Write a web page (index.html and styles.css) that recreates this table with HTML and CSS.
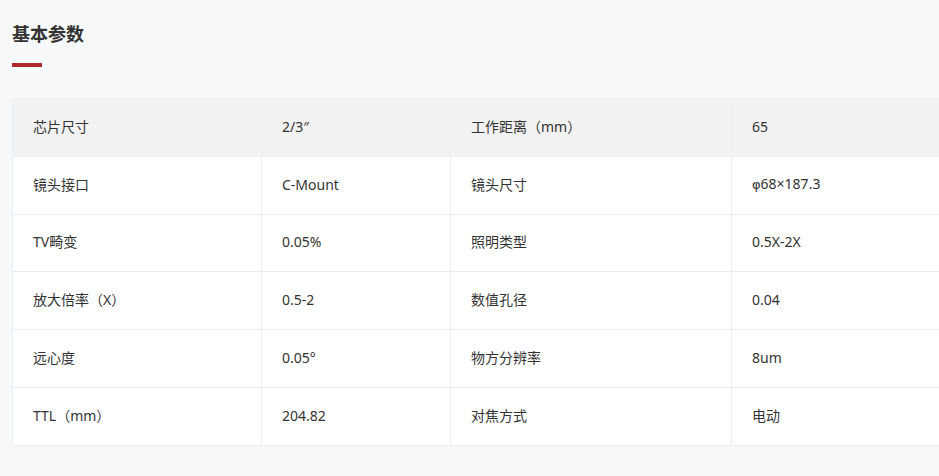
FILE: index.html
```html
<!DOCTYPE html>
<html lang="zh-CN">
<head>
<meta charset="utf-8">
<title>基本参数</title>
<link rel="stylesheet" href="styles.css">
</head>
<body>
<section class="params">
  <h2 class="params-title">基本参数</h2>
  <div class="params-bar"></div>
  <div class="table-wrap">
    <table class="spec">
      <colgroup>
        <col class="c1"><col class="c2"><col class="c3"><col class="c4">
      </colgroup>
      <tbody>
        <tr class="head"><td>芯片尺寸</td><td>2/3″</td><td>工作距离（mm）</td><td>65</td></tr>
        <tr><td>镜头接口</td><td>C-Mount</td><td>镜头尺寸</td><td><span class="phi">φ</span>68×187.3</td></tr>
        <tr><td>TV畸变</td><td>0.05%</td><td>照明类型</td><td>0.5X-2X</td></tr>
        <tr><td>放大倍率（X）</td><td>0.5-2</td><td>数值孔径</td><td>0.04</td></tr>
        <tr><td>远心度</td><td>0.05°</td><td>物方分辨率</td><td>8um</td></tr>
        <tr><td>TTL（mm）</td><td>204.82</td><td>对焦方式</td><td>电动</td></tr>
      </tbody>
    </table>
    <div class="shade"></div>
  </div>
</section>
</body>
</html>
```

FILE: styles.css
```css
html, body {
  margin: 0;
  padding: 0;
  background: #f7f8fa;
  overflow: hidden;
}

body {
  font-family: "Noto Sans", "Noto Sans CJK SC", sans-serif;
  color: #333;
}

.params {
  padding: 22px 0 0 12px;
}

.params-title {
  margin: 0;
  font-family: "Noto Sans CJK SC", sans-serif;
  font-size: 18px;
  line-height: 22px;
  font-weight: 700;
  color: #333;
}

.params-bar {
  width: 30px;
  height: 4px;
  margin-top: 19px;
  background: #b0282a;
}

.table-wrap {
  position: relative;
  margin-top: 31px;
}

.spec {
  width: 927px;
  table-layout: fixed;
  border-collapse: collapse;
  background: #fff;
  position: relative;
  z-index: 1;
}

.c1 { width: 249px; }
.c2 { width: 189px; }
.c3 { width: 281px; }

.spec td {
  height: 57.8px;
  padding: 0 20px 1px;
  border: 1px solid #ececec;
  font-size: 14px;
  line-height: 20px;
  color: #333;
  font-family: "Noto Sans", "Noto Sans CJK SC", sans-serif;
  box-sizing: border-box;
  vertical-align: middle;
}

.spec td:last-child {
  border-right: none;
}

.spec tr.head td {
  background: #f2f2f2;
  border-color: #f0f0f0;
}

.phi {
  font-family: "DejaVu Sans", sans-serif;
  font-size: 13px;
}

.shade {
  position: absolute;
  left: 470px;
  bottom: -6px;
  width: 80px;
  height: 12px;
  border-radius: 50%;
  background: radial-gradient(ellipse at center, rgba(0,0,0,0.06), rgba(0,0,0,0) 70%);
}
```
